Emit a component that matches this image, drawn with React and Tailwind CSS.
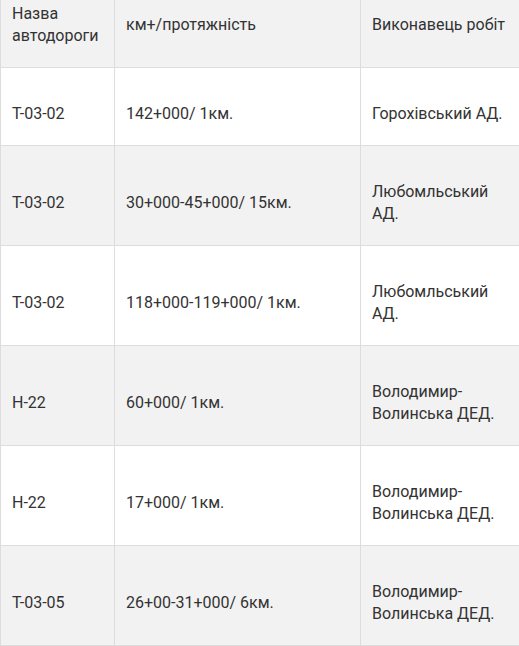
import React from "react";

const rows = [
  ["Т-03-02", "142+000/ 1км.", "Горохівський АД."],
  ["Т-03-02", "30+000-45+000/ 15км.", "Любомльський АД."],
  ["Т-03-02", "118+000-119+000/ 1км.", "Любомльський АД."],
  ["Н-22", "60+000/ 1км.", "Володимир-Волинська ДЕД."],
  ["Н-22", "17+000/ 1км.", "Володимир-Волинська ДЕД."],
  ["Т-03-05", "26+00-31+000/ 6км.", "Володимир-Волинська ДЕД."],
];

export default function App() {
  const cell =
    "border border-[#dddddd] align-middle pt-[35px] pb-[20px] px-[11px] text-left font-normal";
  return (
    <div className="w-[519px] h-[646px] overflow-hidden bg-white">
      <table
        className="-mt-[33px] w-[519px] table-fixed border-collapse text-[16px] leading-[22px] text-[#333333]"
        style={{ fontFamily: "Roboto, 'Noto Sans', sans-serif" }}
      >
        <colgroup>
          <col className="w-[114px]" />
          <col className="w-[246px]" />
          <col className="w-[159px]" />
        </colgroup>
        <thead>
          <tr className="bg-[#f2f2f2]">
            <th className={cell}>Назва автодороги</th>
            <th className={cell}>км+/протяжність</th>
            <th className={cell}>Виконавець робіт</th>
          </tr>
        </thead>
        <tbody>
          {rows.map((r, i) => (
            <tr key={i} className={i % 2 === 1 ? "bg-[#f2f2f2]" : "bg-white"}>
              <td className={cell}>{r[0]}</td>
              <td className={cell}>{r[1]}</td>
              <td className={cell}>{r[2]}</td>
            </tr>
          ))}
        </tbody>
      </table>
    </div>
  );
}
